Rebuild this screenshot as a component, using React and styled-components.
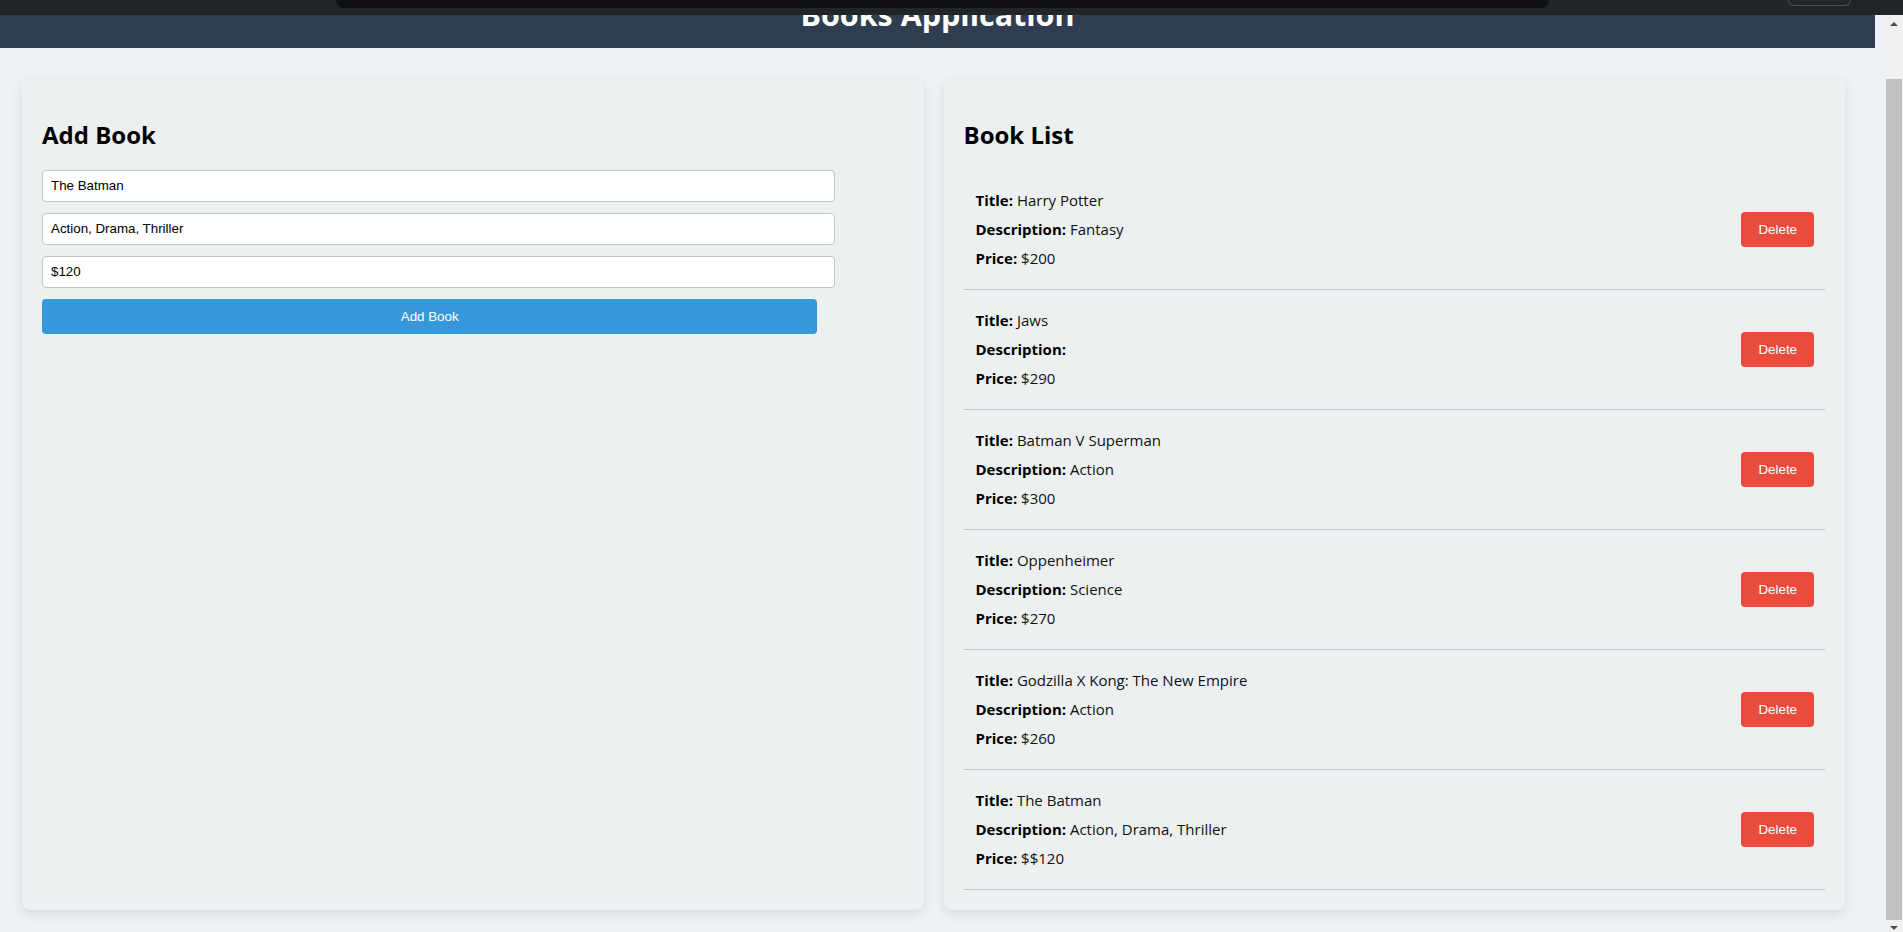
import React, { useLayoutEffect, useRef } from 'react'
import styled, { createGlobalStyle } from 'styled-components'

const books = [
  { title: 'Harry Potter', description: 'Fantasy', price: '$200' },
  { title: 'Jaws', description: '', price: '$290' },
  { title: 'Batman V Superman', description: 'Action', price: '$300' },
  { title: 'Oppenheimer', description: 'Science', price: '$270' },
  { title: 'Godzilla X Kong: The New Empire', description: 'Action', price: '$260' },
  { title: 'The Batman', description: 'Action, Drama, Thriller', price: '$$120' },
]

function App() {
  const scroller = useRef(null)

  // the shot is taken with the page scrolled down to the end
  useLayoutEffect(() => {
    if (scroller.current) scroller.current.scrollTop = scroller.current.scrollHeight
  }, [])

  return (
    <>
      <Global />
      <ui.TopStrip>
        <ui.Pill />
        <ui.Ghost />
      </ui.TopStrip>
      <ui.Window>
        <ui.Scroller ref={scroller}>
          <ui.Header>
            <ui.AppTitle>Books Application</ui.AppTitle>
          </ui.Header>
          <ui.Main>
            <ui.Panel>
              <ui.Heading>Add Book</ui.Heading>
              <ui.Form onSubmit={e => e.preventDefault()}>
                <ui.Input defaultValue="The Batman" />
                <ui.Input defaultValue="Action, Drama, Thriller" />
                <ui.Input defaultValue="$120" />
                <ui.Button type="submit" $color="#3498db" $full>Add Book</ui.Button>
              </ui.Form>
            </ui.Panel>
            <ui.Panel>
              <ui.Heading>Book List</ui.Heading>
              <ui.List>
                {books.map((b, i) => (
                  <ui.Item key={i}>
                    <div>
                      <ui.Line><strong>Title:</strong> {b.title}</ui.Line>
                      <ui.Line><strong>Description:</strong> {b.description}</ui.Line>
                      <ui.Line><strong>Price:</strong> {b.price}</ui.Line>
                    </div>
                    <ui.Button $color="#e74c3c">Delete</ui.Button>
                  </ui.Item>
                ))}
              </ui.List>
            </ui.Panel>
          </ui.Main>
        </ui.Scroller>
        <ui.Rail>
          <ui.Arrow $dir="up" />
          <ui.Track>
            <ui.Thumb />
          </ui.Track>
          <ui.Arrow $dir="down" $short />
        </ui.Rail>
      </ui.Window>
    </>
  )
}

const Global = createGlobalStyle`
  html, body { margin: 0; padding: 0; overflow: hidden; }
  body {
    font-family: "Open Sans", "Noto Sans", Arial, sans-serif;
    background: #eef2f7;
    color: #000;
  }
`

const ui = {
  TopStrip: styled.div`
    height: 15px;
    background: #222528;
    display: flex;
    align-items: flex-start;
    padding-left: 336px;
  `,

  Pill: styled.div`
    width: 1213px;
    height: 8px;
    background: #0f1016;
    border-radius: 0 0 8px 8px;
  `,

  Ghost: styled.div`
    width: 61px;
    height: 5px;
    margin-left: 239px;
    border: 1px solid #4a4d52;
    border-top: none;
    border-radius: 0 0 8px 8px;
  `,

  Window: styled.div`
    display: flex;
    height: calc(100vh - 15px);
  `,

  Scroller: styled.div`
    flex: 1;
    min-width: 0;
    overflow-y: scroll;
    scrollbar-width: none;
    padding-right: 9px;
    background: #eef2f7;

    &::-webkit-scrollbar { display: none; }
  `,

  Rail: styled.div`
    width: 19px;
    flex-shrink: 0;
    display: flex;
    flex-direction: column;
    background: #f1f1f1;
  `,

  Arrow: styled.div`
    height: ${p => (p.$short ? '12px' : '17px')};
    flex-shrink: 0;
    display: flex;
    justify-content: center;
    align-items: ${p => (p.$short ? 'flex-end' : 'center')};
    padding-bottom: ${p => (p.$short ? '2px' : '0')};
    box-sizing: border-box;

    &::after {
      content: '';
      width: 0;
      height: 0;
      border-left: 4px solid transparent;
      border-right: 4px solid transparent;
      ${p => (p.$dir === 'up'
        ? 'border-bottom: 4px solid #505050;'
        : 'border-top: 4px solid #505050;')}
    }
  `,

  Track: styled.div`
    flex: 1;
    padding: 47px 1px 0 2px;
  `,

  Thumb: styled.div`
    height: 841px;
    background: #c1c1c1;
  `,

  Header: styled.header`
    background: #2e3e50;
    color: #fff;
    text-align: center;
    padding: 33px 0 14px;
  `,

  AppTitle: styled.h1`
    margin: 0;
    font-size: 30.5px;
    line-height: 40px;
    font-weight: 700;
  `,

  Main: styled.main`
    display: flex;
    align-items: stretch;
    gap: 20px;
    padding: 31px 30px 22px 22px;
  `,

  Panel: styled.section`
    flex: 1;
    min-width: 0;
    background: #ecf0f1;
    border-radius: 8px;
    padding: 20px;
    box-shadow: 0 4px 12px rgba(0, 0, 0, 0.1);
  `,

  Heading: styled.h2`
    margin: 20px 0;
    font-size: 24px;
    line-height: 31px;
    font-weight: 700;
  `,

  Form: styled.form`
    width: 90%;
  `,

  Input: styled.input`
    display: block;
    width: 100%;
    box-sizing: content-box;
    padding: 8px;
    margin: 0 0 11px;
    border: 1px solid #c4c4c4;
    border-radius: 4px;
    background: #fff;
    font-family: "Liberation Sans", Arial, sans-serif;
    font-size: 13.33px;
    line-height: 14px;
    color: #000;
    outline: none;
  `,

  Button: styled.button`
    display: block;
    width: ${p => (p.$full ? '100%' : 'auto')};
    flex-shrink: 0;
    padding: 10px 17px;
    border: none;
    border-radius: 4px;
    background: ${p => p.$color};
    color: #fff;
    font-family: "Liberation Sans", Arial, sans-serif;
    font-size: 13.33px;
    line-height: 15px;
    cursor: pointer;
  `,

  List: styled.ul`
    list-style: none;
    margin: 0;
    padding: 0;
  `,

  Item: styled.li`
    display: flex;
    justify-content: space-between;
    align-items: center;
    padding: 12px 11px 12px 12px;
    border-bottom: 1px solid #c3c7ca;
  `,

  Line: styled.p`
    margin: 8px 0;
    font-size: 15px;
    line-height: 21px;
    color: #111;

    strong { font-weight: 700; color: #000; }
  `,
}

export default App
